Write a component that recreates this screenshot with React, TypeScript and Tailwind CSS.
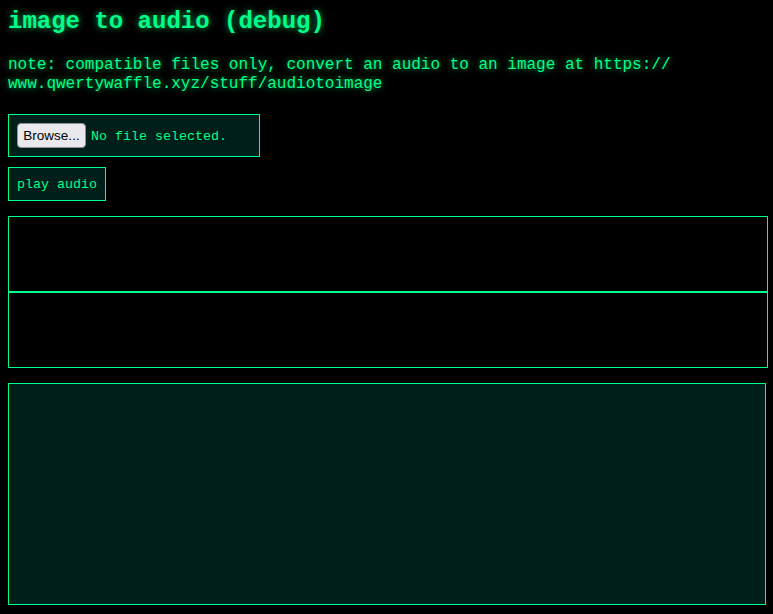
export default function App() {
  const glow = '[text-shadow:0_0_6px_rgba(0,255,136,0.7)]';
  return (
    <div className="min-h-screen bg-black p-2 text-[#00ff88] font-['Liberation_Mono','Courier_New',monospace]">
      <h1 className={`text-[24px] font-bold leading-[27px] ${glow}`}>image to audio (debug)</h1>
      <p className={`mt-[21px] text-[16px] leading-[19px] ${glow}`}>
        note: compatible files only, convert an audio to an image at https://
        <br />
        www.qwertywaffle.xyz/stuff/audiotoimage
      </p>

      <div className="mt-[20px] flex h-[43px] w-[252px] items-center gap-[5px] border border-[#00ff88] bg-[#001f1a] px-2">
        <button className="h-[25px] w-[69px] rounded-[4px] border border-[#8f8f9d] bg-[#e9e9ed] pt-px text-[13.5px] text-black font-['Liberation_Sans',Arial,sans-serif]">
          Browse...
        </button>
        <span className="pt-[2px] text-[13.33px]">No file selected.</span>
      </div>

      <button className="mt-[10px] block h-[34px] w-[98px] border border-[#00ff88] bg-[#001f1a] px-2 pt-[2px] text-left text-[13.33px]">
        play audio
      </button>

      <div className="mt-[15px] flex w-[760px] flex-col">
        <div className="h-[76px] border border-[#00ff88] bg-black" />
        <div className="h-[76px] border border-[#00ff88] bg-black" />
      </div>

      <div className="mt-[15px] h-[222px] w-[758px] border border-[#00ff88] bg-[#001f1a]" />
    </div>
  );
}
